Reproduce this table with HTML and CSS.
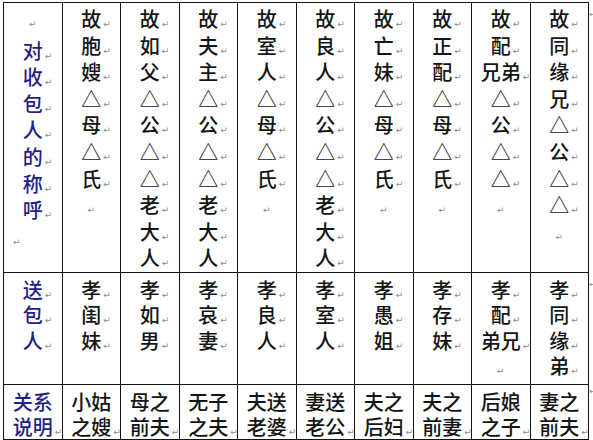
FILE: index.html
```html
<!DOCTYPE html>
<html lang="zh">
<head>
<meta charset="utf-8">
<link rel="stylesheet" href="styles.css">
</head>
<body>
<div class="wrap">
<table class="grid">
<tr class="r1">
<td class="hd"><p><i class="pm0">↵</i></p><p>对<i class="pm">↵</i></p><p>收<i class="pm">↵</i></p><p>包<i class="pm">↵</i></p><p>人<i class="pm">↵</i></p><p>的<i class="pm">↵</i></p><p>称<i class="pm">↵</i></p><p>呼<i class="pm">↵</i></p><p class="left"><i class="pm0">↵</i></p></td>
<td><p>故<i class="pm">↵</i></p><p>胞<i class="pm">↵</i></p><p>嫂<i class="pm">↵</i></p><p>△<i class="pm">↵</i></p><p>母<i class="pm">↵</i></p><p>△<i class="pm">↵</i></p><p>氏<i class="pm">↵</i></p><p><i class="pm0">↵</i></p></td>
<td><p>故<i class="pm">↵</i></p><p>如<i class="pm">↵</i></p><p>父<i class="pm">↵</i></p><p>△<i class="pm">↵</i></p><p>公<i class="pm">↵</i></p><p>△<i class="pm">↵</i></p><p>△<i class="pm">↵</i></p><p>老<i class="pm">↵</i></p><p>大<i class="pm">↵</i></p><p>人<i class="pm">↵</i></p></td>
<td><p>故<i class="pm">↵</i></p><p>夫<i class="pm">↵</i></p><p>主<i class="pm">↵</i></p><p>△<i class="pm">↵</i></p><p>公<i class="pm">↵</i></p><p>△<i class="pm">↵</i></p><p>△<i class="pm">↵</i></p><p>老<i class="pm">↵</i></p><p>大<i class="pm">↵</i></p><p>人<i class="pm">↵</i></p></td>
<td><p>故<i class="pm">↵</i></p><p>室<i class="pm">↵</i></p><p>人<i class="pm">↵</i></p><p>△<i class="pm">↵</i></p><p>母<i class="pm">↵</i></p><p>△<i class="pm">↵</i></p><p>氏<i class="pm">↵</i></p><p><i class="pm0">↵</i></p></td>
<td><p>故<i class="pm">↵</i></p><p>良<i class="pm">↵</i></p><p>人<i class="pm">↵</i></p><p>△<i class="pm">↵</i></p><p>公<i class="pm">↵</i></p><p>△<i class="pm">↵</i></p><p>△<i class="pm">↵</i></p><p>老<i class="pm">↵</i></p><p>大<i class="pm">↵</i></p><p>人<i class="pm">↵</i></p></td>
<td><p>故<i class="pm">↵</i></p><p>亡<i class="pm">↵</i></p><p>妹<i class="pm">↵</i></p><p>△<i class="pm">↵</i></p><p>母<i class="pm">↵</i></p><p>△<i class="pm">↵</i></p><p>氏<i class="pm">↵</i></p><p><i class="pm0">↵</i></p></td>
<td><p>故<i class="pm">↵</i></p><p>正<i class="pm">↵</i></p><p>配<i class="pm">↵</i></p><p>△<i class="pm">↵</i></p><p>母<i class="pm">↵</i></p><p>△<i class="pm">↵</i></p><p>氏<i class="pm">↵</i></p><p><i class="pm0">↵</i></p></td>
<td><p>故<i class="pm">↵</i></p><p>配<i class="pm">↵</i></p><p>兄弟<i class="pm">↵</i></p><p>△<i class="pm">↵</i></p><p>公<i class="pm">↵</i></p><p>△<i class="pm">↵</i></p><p>△<i class="pm">↵</i></p><p><i class="pm0">↵</i></p></td>
<td><p>故<i class="pm">↵</i></p><p>同<i class="pm">↵</i></p><p>缘<i class="pm">↵</i></p><p>兄<i class="pm">↵</i></p><p>△<i class="pm">↵</i></p><p>公<i class="pm">↵</i></p><p>△<i class="pm">↵</i></p><p>△<i class="pm">↵</i></p><p><i class="pm0">↵</i></p></td>
</tr>
<tr class="r2">
<td class="hd"><p>送<i class="pm">↵</i></p><p>包<i class="pm">↵</i></p><p>人<i class="pm">↵</i></p></td>
<td><p>孝<i class="pm">↵</i></p><p>闺<i class="pm">↵</i></p><p>妹<i class="pm">↵</i></p></td>
<td><p>孝<i class="pm">↵</i></p><p>如<i class="pm">↵</i></p><p>男<i class="pm">↵</i></p></td>
<td><p>孝<i class="pm">↵</i></p><p>哀<i class="pm">↵</i></p><p>妻<i class="pm">↵</i></p></td>
<td><p>孝<i class="pm">↵</i></p><p>良<i class="pm">↵</i></p><p>人<i class="pm">↵</i></p></td>
<td><p>孝<i class="pm">↵</i></p><p>室<i class="pm">↵</i></p><p>人<i class="pm">↵</i></p></td>
<td><p>孝<i class="pm">↵</i></p><p>愚<i class="pm">↵</i></p><p>姐<i class="pm">↵</i></p></td>
<td><p>孝<i class="pm">↵</i></p><p>存<i class="pm">↵</i></p><p>妹<i class="pm">↵</i></p></td>
<td><p>孝<i class="pm">↵</i></p><p>配<i class="pm">↵</i></p><p>弟兄<i class="pm">↵</i></p><p><i class="pm0">↵</i></p></td>
<td><p>孝<i class="pm">↵</i></p><p>同<i class="pm">↵</i></p><p>缘<i class="pm">↵</i></p><p>弟<i class="pm">↵</i></p></td>
</tr>
<tr class="r3">
<td class="hd"><p>关系</p><p>说明<i class="pm">↵</i></p></td>
<td><p>小姑</p><p>之嫂<i class="pm">↵</i></p></td>
<td><p>母之</p><p>前夫<i class="pm">↵</i></p></td>
<td><p>无子</p><p>之夫<i class="pm">↵</i></p></td>
<td><p>夫送</p><p>老婆<i class="pm">↵</i></p></td>
<td><p>妻送</p><p>老公<i class="pm">↵</i></p></td>
<td><p>夫之</p><p>后妇<i class="pm">↵</i></p></td>
<td><p>夫之</p><p>前妻<i class="pm">↵</i></p></td>
<td><p>后娘</p><p>之子<i class="pm">↵</i></p></td>
<td><p>妻之</p><p>前夫<i class="pm">↵</i></p></td>
</tr>
</table>
<span class="rowend e1">↵</span>
<span class="rowend e2">↵</span>
<span class="rowend e3">↵</span>
</div>
</body>
</html>
```
FILE: styles.css
```css
html, body {
  margin: 0;
  padding: 0;
  background: #ffffff;
}
body {
  font-family: "Noto Sans CJK SC", "Noto Sans CJK JP", sans-serif;
  color: #141414;
}
.wrap {
  position: relative;
  padding: 2px 0 0 3px;
  width: 590px;
}
.grid {
  border-collapse: collapse;
  table-layout: fixed;
  width: 586px;
}
.grid td {
  border: 1px solid #141414;
  vertical-align: top;
  text-align: center;
  padding: 3px 0 0 0;
  font-size: 20px;
  font-weight: 500;
  line-height: 26.6px;
  overflow: visible;
}
.grid p {
  margin: 0;
  white-space: nowrap;
}
.r1 td { height: 266px; }
.r2 td {
  height: 101px;
  padding-top: 4px;
  line-height: 25.3px;
}
.r3 td {
  height: 50px;
  padding-top: 4px;
  line-height: 25px;
}
.grid .hd {
  color: #1f1f86;
}
.pm {
  display: inline-block;
  width: 0;
  text-indent: 2px;
  font-style: normal;
  font-weight: 400;
  font-family: "DejaVu Sans", sans-serif;
  font-size: 9px;
  line-height: 1;
  color: #8c8c8c;
}
.pm0 {
  font-style: normal;
  font-weight: 400;
  font-family: "DejaVu Sans", sans-serif;
  font-size: 9px;
  color: #8c8c8c;
}
.grid p.left {
  text-align: left;
  padding-left: 9px;
}
.rowend {
  position: absolute;
  left: 589px;
  font-family: "DejaVu Sans", sans-serif;
  font-size: 9px;
  line-height: 1;
  color: #8c8c8c;
}
.e1 { top: 10px; }
.e2 { top: 280px; }
.e3 { top: 387px; }
```
